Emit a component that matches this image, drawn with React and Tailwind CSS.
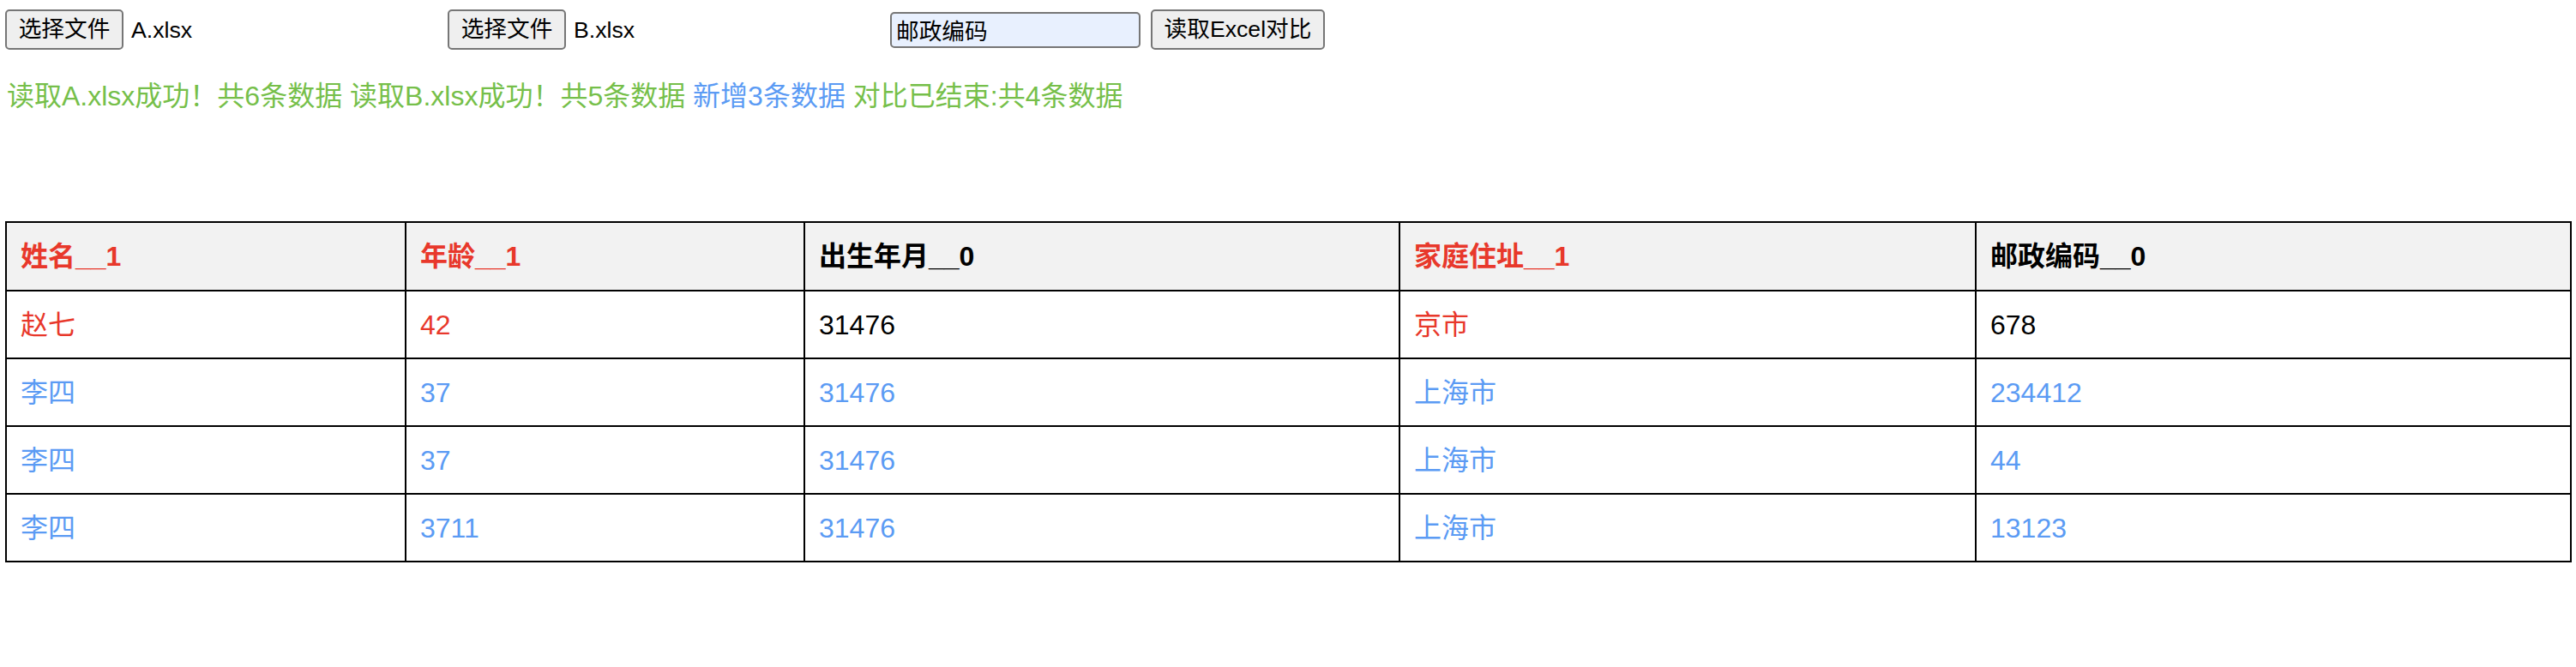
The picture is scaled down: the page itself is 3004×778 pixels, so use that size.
import React from "react";

const FONT = {
  fontFamily:
    '"Liberation Sans", "Noto Sans CJK SC", Arial, sans-serif',
};

const RED = "text-[#e8382b]";
const BLUE = "text-[#5b9bf4]";
const BLACK = "text-black";

const headers = [
  { label: "姓名__1", color: RED },
  { label: "年龄__1", color: RED },
  { label: "出生年月__0", color: BLACK },
  { label: "家庭住址__1", color: RED },
  { label: "邮政编码__0", color: BLACK },
];

const rows = [
  [
    { v: "赵七", c: RED },
    { v: "42", c: RED },
    { v: "31476", c: BLACK },
    { v: "京市", c: RED },
    { v: "678", c: BLACK },
  ],
  ["李四", "37", "31476", "上海市", "234412"].map((v) => ({ v, c: BLUE })),
  ["李四", "37", "31476", "上海市", "44"].map((v) => ({ v, c: BLUE })),
  ["李四", "3711", "31476", "上海市", "13123"].map((v) => ({ v, c: BLUE })),
];

function FilePick({ name }) {
  return (
    <div className="flex items-center w-[507px] shrink-0">
      <button className="h-[47px] w-[138px] border-2 border-[#767676] bg-[#efefef] rounded-[5px] text-[26.67px] text-black leading-none">
        选择文件
      </button>
      <span className="ml-[9px] text-[26.67px] text-black">{name}</span>
    </div>
  );
}

export default function App() {
  return (
    <div className="bg-white min-h-[778px] px-[6px] pt-[11px]" style={FONT}>
      {/* controls */}
      <div className="flex items-center h-[47px]">
        <FilePick name="A.xlsx" />
        <div className="w-[9px] shrink-0" />
        <FilePick name="B.xlsx" />
        <div className="w-[9px] shrink-0" />
        <input
          defaultValue="邮政编码"
          className="h-[42px] w-[292px] border-2 border-[#767676] bg-[#e8f0fe] rounded-[5px] px-[5px] text-[26.67px] text-black outline-none"
          style={FONT}
        />
        <button className="ml-[12px] h-[47px] w-[203px] border-2 border-[#767676] bg-[#efefef] rounded-[5px] text-[26.67px] text-black leading-none">
          读取Excel对比
        </button>
      </div>

      {/* status */}
      <div className="mt-[36px] pl-[2px] text-[32px] leading-[37px] whitespace-nowrap">
        <span className="text-[#76bf4a]">读取A.xlsx成功！共6条数据</span>{" "}
        <span className="text-[#76bf4a]">读取B.xlsx成功！共5条数据</span>{" "}
        <span className="text-[#5b9bf4]">新增3条数据</span>{" "}
        <span className="text-[#76bf4a]">对比已结束:共4条数据</span>
      </div>

      {/* result table */}
      <table className="mt-[127px] w-[2991px] table-fixed border-collapse border-2 border-black text-[32px]">
        <colgroup>
          <col className="w-[466px]" />
          <col className="w-[465px]" />
          <col className="w-[694px]" />
          <col className="w-[672px]" />
          <col className="w-[694px]" />
        </colgroup>
        <thead>
          <tr className="h-[80px] bg-[#f2f2f2]">
            {headers.map((h) => (
              <th
                key={h.label}
                className={`border-2 border-black px-[16px] text-left font-bold ${h.color}`}
              >
                {h.label}
              </th>
            ))}
          </tr>
        </thead>
        <tbody>
          {rows.map((row, i) => (
            <tr key={i} className="h-[79px]">
              {row.map((cell, j) => (
                <td
                  key={j}
                  className={`border-2 border-black px-[16px] ${cell.c}`}
                >
                  {cell.v}
                </td>
              ))}
            </tr>
          ))}
        </tbody>
      </table>
    </div>
  );
}
